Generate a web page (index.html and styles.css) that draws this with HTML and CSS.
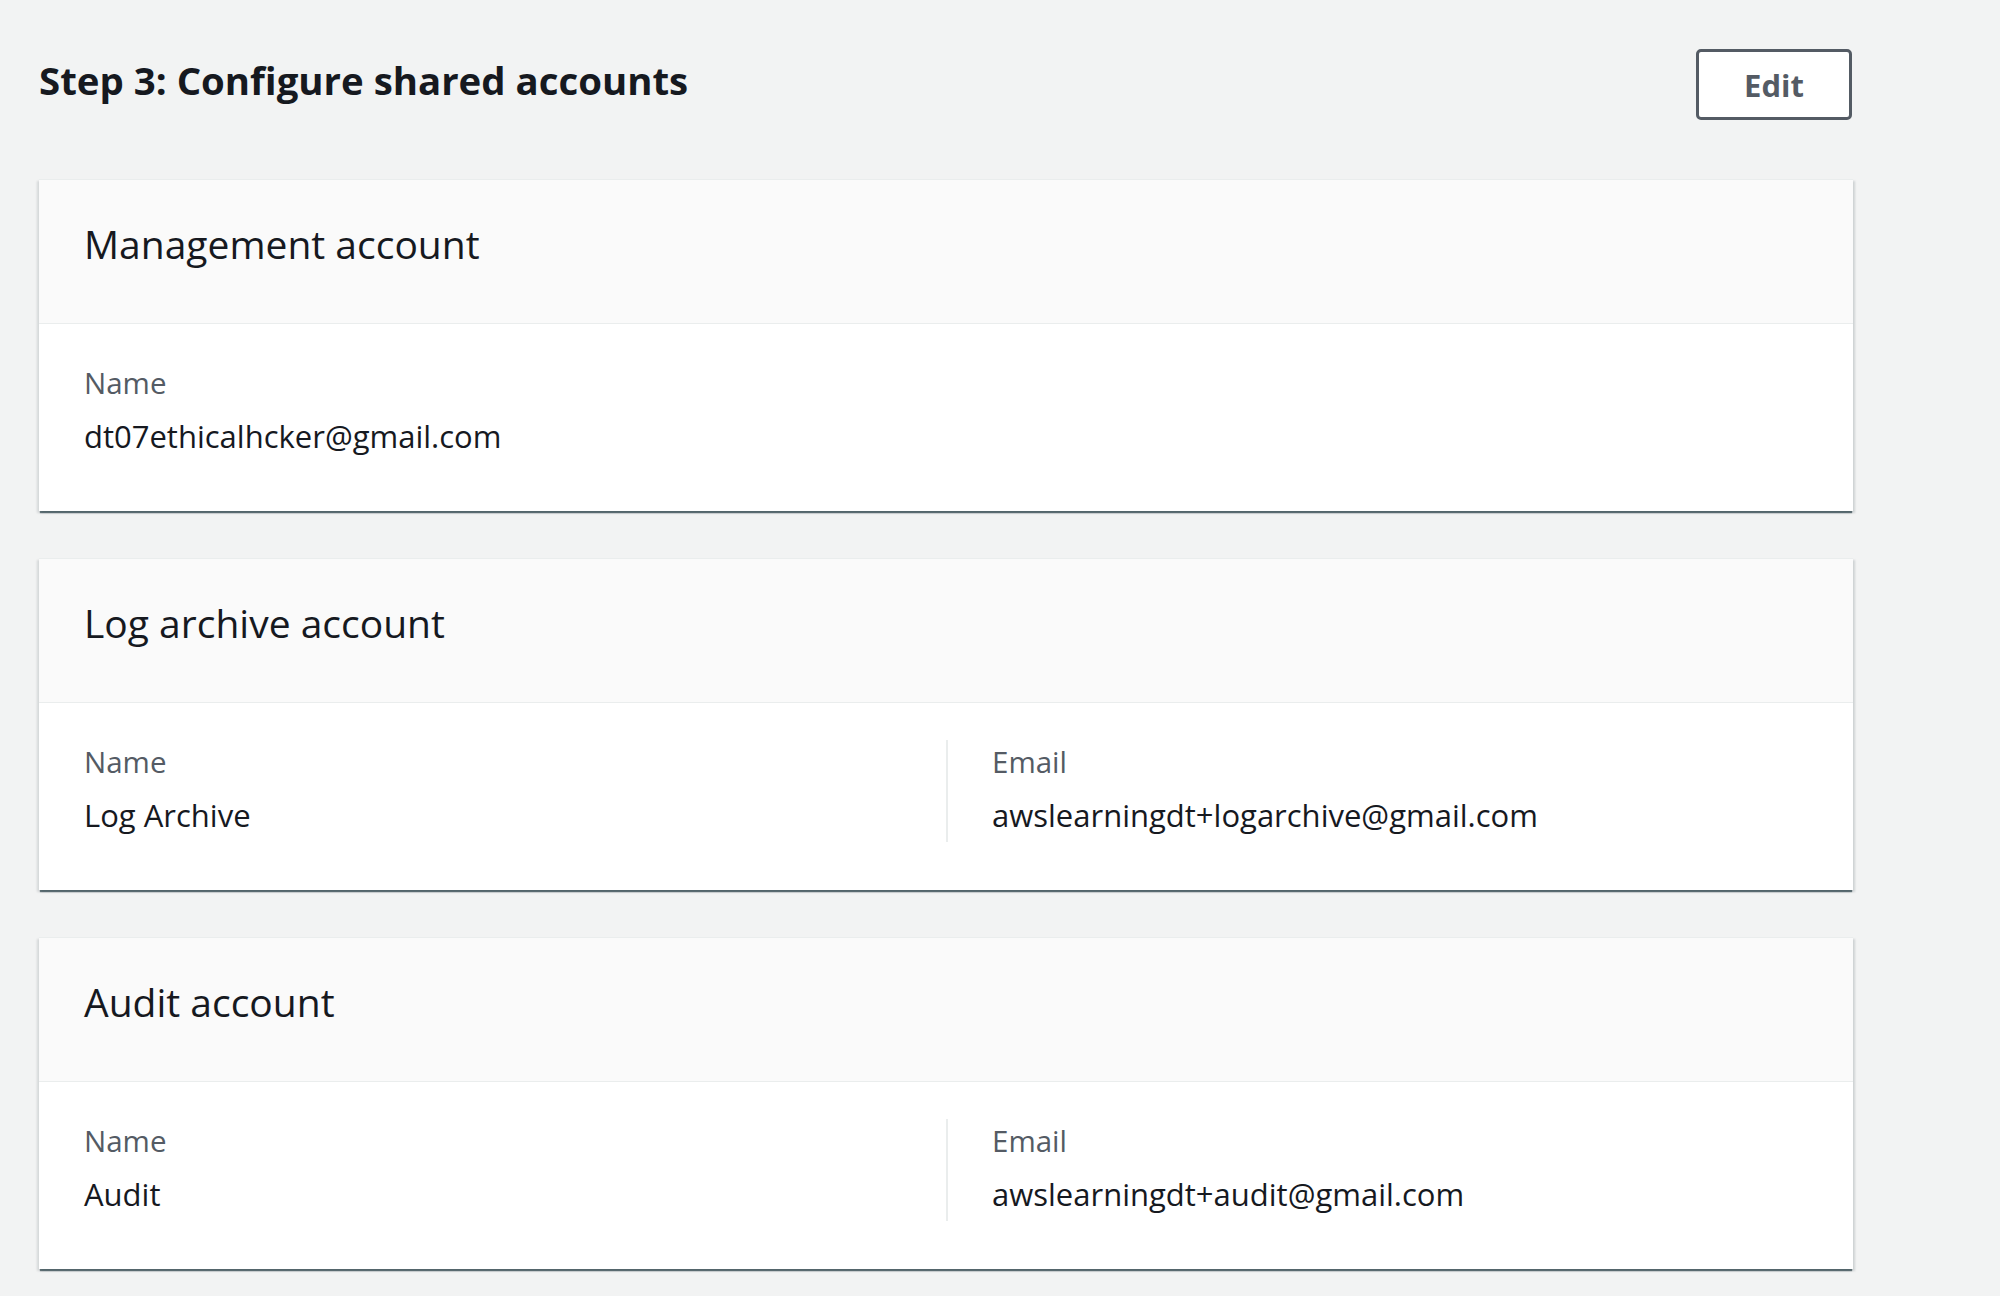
FILE: index.html
```html
<!DOCTYPE html>
<html lang="en">
<head>
<meta charset="utf-8">
<title>Step 3: Configure shared accounts</title>
<link rel="stylesheet" href="styles.css">
</head>
<body>
<main class="page">
  <div class="page-header">
    <h1 class="page-title">Step 3: Configure shared accounts</h1>
    <button class="btn" type="button">Edit</button>
  </div>

  <section class="card">
    <div class="card-header"><h2 class="card-title">Management account</h2></div>
    <div class="card-body">
      <div class="kv-grid single">
        <div class="kv-col">
          <div class="kv-label">Name</div>
          <div class="kv-value">dt07ethicalhcker@gmail.com</div>
        </div>
      </div>
    </div>
  </section>

  <section class="card">
    <div class="card-header"><h2 class="card-title">Log archive account</h2></div>
    <div class="card-body">
      <div class="kv-grid">
        <div class="kv-col">
          <div class="kv-label">Name</div>
          <div class="kv-value">Log Archive</div>
        </div>
        <div class="kv-col divided">
          <div class="kv-label">Email</div>
          <div class="kv-value">awslearningdt+logarchive@gmail.com</div>
        </div>
      </div>
    </div>
  </section>

  <section class="card">
    <div class="card-header"><h2 class="card-title">Audit account</h2></div>
    <div class="card-body">
      <div class="kv-grid">
        <div class="kv-col">
          <div class="kv-label">Name</div>
          <div class="kv-value">Audit</div>
        </div>
        <div class="kv-col divided">
          <div class="kv-label">Email</div>
          <div class="kv-value">awslearningdt+audit@gmail.com</div>
        </div>
      </div>
    </div>
  </section>
</main>
</body>
</html>
```
FILE: styles.css
```css
html, body {
  margin: 0;
  padding: 0;
  background: #f2f3f3;
}
body {
  font-family: "Open Sans", "Noto Sans", sans-serif;
  color: #16191f;
}
.page {
  width: 1814px;
  padding: 49px 0 20px 39px;
  display: flex;
  flex-direction: column;
  gap: 47px;
}
.page-header {
  display: flex;
  justify-content: space-between;
  align-items: flex-start;
  margin-bottom: 12px;
}
.page-title {
  margin: 5px 0 0 0;
  font-size: 38.4px;
  line-height: 52px;
  font-weight: 700;
  color: #16191f;
}
.btn {
  width: 156px;
  height: 71px;
  margin-right: 1px;
  background: #ffffff;
  border: 3px solid #545b64;
  border-radius: 5px;
  font-family: "Open Sans", "Noto Sans", sans-serif;
  font-weight: 700;
  font-size: 31px;
  color: #545b64;
  padding: 0;
  cursor: pointer;
}
.card {
  background: #ffffff;
  border-top: 1px solid #eaeded;
  box-shadow: 0 3px 1px -1px rgba(0, 28, 36, 0.55),
              2px 2px 2px 0 rgba(0, 28, 36, 0.15),
              -2px 2px 2px 0 rgba(0, 28, 36, 0.12);
}
.card-header {
  background: #fafafa;
  border-bottom: 1px solid #eaeded;
  padding: 37px 45px 52px 45px;
}
.card-title {
  margin: 0;
  font-size: 39px;
  line-height: 54px;
  font-weight: 400;
  color: #16191f;
}
.card-body {
  padding: 37px 45px 48px 45px;
}
.kv-grid {
  display: grid;
  grid-template-columns: 1fr 1fr;
}
.kv-col {
  padding-bottom: 5px;
}
.kv-col.divided {
  border-left: 2px solid #eaeded;
  padding-left: 44px;
}
.kv-label {
  font-size: 29.5px;
  line-height: 44px;
  color: #545b64;
  margin-bottom: 9px;
}
.kv-value {
  font-size: 31px;
  line-height: 44px;
  color: #16191f;
}
```
